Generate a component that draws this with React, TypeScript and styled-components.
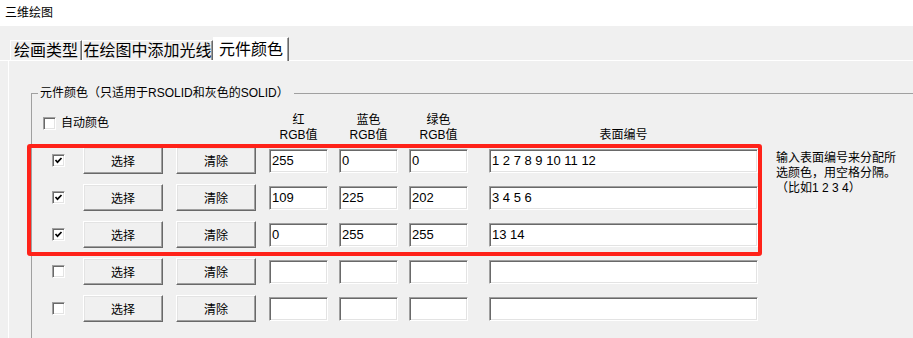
import styled, { createGlobalStyle } from "styled-components";

interface IColorRow {
  checked: boolean;
  red: string;
  blue: string;
  green: string;
  faces: string;
}

const colorRows: IColorRow[] = [
  { checked: true, red: "255", blue: "0", green: "0", faces: "1 2 7 8 9 10 11 12" },
  { checked: true, red: "109", blue: "225", green: "202", faces: "3 4 5 6" },
  { checked: true, red: "0", blue: "255", green: "255", faces: "13 14" },
  { checked: false, red: "", blue: "", green: "", faces: "" },
  { checked: false, red: "", blue: "", green: "", faces: "" },
];

const tabs = [
  { label: "绘画类型", width: 72 },
  { label: "在绘图中添加光线", width: 131 },
  { label: "元件颜色", width: 76, active: true },
];

function CheckMark({ checked }: { checked: boolean }) {
  return (
    <CheckBox>
      {checked && (
        <svg width="11" height="11" viewBox="0 0 11 11">
          <polyline
            points="2.5,5 4.5,7.2 8.5,3"
            fill="none"
            stroke="#000"
            strokeWidth="1.7"
          />
        </svg>
      )}
    </CheckBox>
  );
}

function Row({ row }: { row: IColorRow }) {
  return (
    <RowGrid>
      <CheckCell>
        <CheckMark checked={row.checked} />
      </CheckCell>
      <PushButton>选择</PushButton>
      <PushButton>清除</PushButton>
      <Field $w={59} value={row.red} readOnly />
      <Field $w={59} value={row.blue} readOnly />
      <Field $w={59} value={row.green} readOnly />
      <Field $w={269} value={row.faces} readOnly />
    </RowGrid>
  );
}

function App() {
  const marked = colorRows.slice(0, 3);
  const rest = colorRows.slice(3);

  return (
    <>
      <GlobalStyle />
      <Window>
        <TitleBar>三维绘图</TitleBar>
        <TabStrip>
          {tabs.map((tab) => (
            <Tab key={tab.label} $w={tab.width} $active={tab.active}>
              {tab.label}
            </Tab>
          ))}
        </TabStrip>
        <TabPanel>
          <GroupBox>
            <GroupTitle>元件颜色（只适用于RSOLID和灰色的SOLID）</GroupTitle>
            <Content>
              <Main>
                <HeaderGrid>
                  <AutoColor>
                    <CheckMark checked={false} />
                    自动颜色
                  </AutoColor>
                  <ColHead>
                    红
                    <br />
                    RGB值
                  </ColHead>
                  <ColHead>
                    蓝色
                    <br />
                    RGB值
                  </ColHead>
                  <ColHead>
                    绿色
                    <br />
                    RGB值
                  </ColHead>
                  <ColHead $wide>表面编号</ColHead>
                </HeaderGrid>
                <Highlight>
                  {marked.map((row, i) => (
                    <Row key={i} row={row} />
                  ))}
                </Highlight>
                <Rows>
                  {rest.map((row, i) => (
                    <Row key={i} row={row} />
                  ))}
                </Rows>
              </Main>
              <Hint>
                输入表面编号来分配所
                <br />
                选颜色，用空格分隔。
                <br />
                （比如1 2 3 4）
              </Hint>
            </Content>
          </GroupBox>
        </TabPanel>
      </Window>
    </>
  );
}

export default App;

const GlobalStyle = createGlobalStyle`
  html, body {
    margin: 0;
    background: #f0f0f0;
    overflow: hidden;
  }
  body {
    font-family: "Liberation Sans", "Noto Sans CJK SC", sans-serif;
    font-size: 12px;
    color: #000;
  }
`;

const columns = "40px 93px 93px 70px 70px 80px 269px";

const Window = styled.div`
  width: 913px;
  height: 338px;
  overflow: hidden;
  display: flex;
  flex-direction: column;
`;

const TitleBar = styled.div`
  flex: none;
  height: 26px;
  box-sizing: border-box;
  padding: 6px 0 0 5px;
  background: #fff;
  line-height: 14px;
`;

const TabStrip = styled.div`
  flex: none;
  display: flex;
  align-items: flex-end;
  height: 23px;
  margin-top: 11px;
  padding-left: 10px;
  border-bottom: 1px solid #fff;
`;

const Tab = styled.div<{ $w: number; $active?: boolean }>`
  position: relative;
  display: flex;
  align-items: center;
  justify-content: center;
  width: ${(p) => p.$w}px;
  height: ${(p) => (p.$active ? 24 : 20)}px;
  margin-bottom: ${(p) => (p.$active ? -1 : 0)}px;
  box-sizing: border-box;
  background: ${(p) => (p.$active ? "#fff" : "#f0f0f0")};
  border-top: 1px solid #fff;
  border-left: 1px solid #fff;
  border-right: 1px solid #696969;
  box-shadow: inset -1px 0 0 #a0a0a0;
  font-size: 16px;
  line-height: 18px;
  white-space: nowrap;
`;

const TabPanel = styled.div`
  flex: 1;
  min-height: 0;
  overflow: hidden;
  margin-left: 8px;
  border-left: 1px solid #fff;
`;

const GroupBox = styled.fieldset`
  margin: 25px 0 0 22px;
  padding: 13px 0 0 0;
  min-width: 0;
  width: 1000px;
  height: 400px;
  border: 0;
  border-top: 1px solid #a0a0a0;
  border-left: 1px solid #a0a0a0;
`;

const GroupTitle = styled.legend`
  margin-left: 6px;
  padding: 0 5px 0 2px;
  font-size: 12px;
  line-height: 14px;
  white-space: nowrap;
`;

const Content = styled.div`
  display: flex;
  align-items: flex-start;
  padding-left: 11px;
`;

const Main = styled.div`
  display: flex;
  flex-direction: column;
`;

const HeaderGrid = styled.div`
  display: grid;
  grid-template-columns: ${columns};
  align-items: end;
  height: 30px;
  line-height: 15px;
`;

const AutoColor = styled.div`
  grid-column: 1 / 4;
  align-self: start;
  display: flex;
  align-items: center;
  gap: 5px;
  margin-top: 4px;
  line-height: 13px;
`;

const ColHead = styled.div<{ $wide?: boolean }>`
  width: ${(p) => (p.$wide ? 269 : 59)}px;
  text-align: center;
  white-space: nowrap;
`;

const Rows = styled.div`
  display: grid;
  row-gap: 10px;
  margin-top: 10px;
`;

const Highlight = styled(Rows)`
  position: relative;
  margin-top: 4px;

  &::after {
    content: "";
    position: absolute;
    top: -3px;
    left: -16px;
    right: -4px;
    bottom: -8px;
    border: 4px solid #ff2219;
    border-radius: 3px;
    pointer-events: none;
  }
`;

const RowGrid = styled.div`
  display: grid;
  grid-template-columns: ${columns};
  align-items: center;
  height: 27px;
`;

const CheckCell = styled.div`
  display: flex;
  padding-left: 9px;
`;

const CheckBox = styled.span`
  display: inline-flex;
  align-items: center;
  justify-content: center;
  flex: none;
  width: 13px;
  height: 13px;
  box-sizing: border-box;
  background: #fff;
  border: 1px solid;
  border-color: #a0a0a0 #fff #fff #a0a0a0;
  box-shadow: inset 1px 1px 0 #696969, inset -1px -1px 0 #e3e3e3;
`;

const PushButton = styled.button`
  width: 80px;
  height: 27px;
  box-sizing: border-box;
  padding: 0;
  font: 12px "Liberation Sans", "Noto Sans CJK SC", sans-serif;
  color: #000;
  background: #f0f0f0;
  border: 1px solid;
  border-color: #fff #696969 #696969 #fff;
  box-shadow: inset -1px -1px 0 #a0a0a0, inset 1px 1px 0 #e3e3e3;
`;

const Field = styled.input<{ $w: number }>`
  width: ${(p) => p.$w}px;
  height: 24px;
  box-sizing: border-box;
  margin: 0;
  padding: 0 0 0 2px;
  font: 13px "Liberation Sans", sans-serif;
  color: #000;
  background: #fff;
  border: 1px solid;
  border-color: #a0a0a0 #fff #fff #a0a0a0;
  box-shadow: inset 1px 1px 0 #696969, inset -1px -1px 0 #e3e3e3;
  outline: none;
`;

const Hint = styled.div`
  margin: 38px 0 0 18px;
  line-height: 15px;
  white-space: nowrap;
`;
